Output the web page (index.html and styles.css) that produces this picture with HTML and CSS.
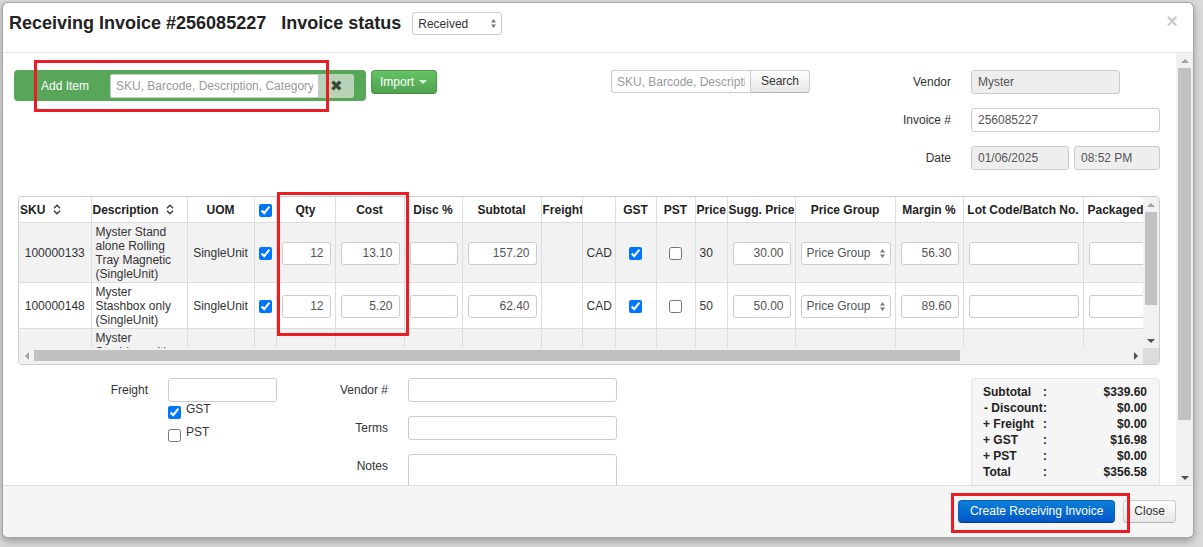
FILE: index.html
```html
<!DOCTYPE html>
<html lang="en">
<head>
	<meta charset="UTF-8">
	<title>Receiving Invoice</title>
	<link rel="stylesheet" href="styles.css">
</head>
<body>
	<div class="modal">
		<div class="modal-header">
			<h3 class="title">Receiving Invoice #256085227 <span class="title-status">Invoice status</span></h3>
			<div class="select status-select">
				<span>Received</span>
				<svg width="5" height="9" viewBox="0 0 5 9"><path d="M0 3.5L2.5 0L5 3.5Z M0 5.5L2.5 9L5 5.5Z" fill="#777"/></svg>
			</div>
			<span class="close">&times;</span>
		</div>

		<div class="modal-body">
			<div class="body-content">
				<div class="top-row">
					<div class="add-bar">
						<span class="add-label">Add Item</span>
						<input type="text" class="add-input" placeholder="SKU, Barcode, Description, Category">
						<span class="clear-btn">&#10006;</span>
					</div>
					<button class="btn btn-success import">Import <span class="caret"></span></button>
					<div class="search-group">
						<input type="text" class="search-input" placeholder="SKU, Barcode, Description">
						<button class="btn search-btn">Search</button>
					</div>
					<div class="vendor-form">
						<label class="f-label">Vendor</label>
						<div><input type="text" class="f-input readonly vendor-input" value="Myster"></div>
						<label class="f-label">Invoice #</label>
						<div><input type="text" class="f-input invoice-input" value="256085227"></div>
						<label class="f-label">Date</label>
						<div class="date-pair">
							<input type="text" class="f-input readonly date-input" value="01/06/2025">
							<input type="text" class="f-input readonly time-input" value="08:52 PM">
						</div>
					</div>
				</div>

				<div class="grid-wrap">
					<div class="grid-main">
						<div class="grid-view">
							<table class="grid">
								<colgroup>
									<col class="w-sku"><col class="w-desc"><col class="w-uom"><col class="w-chk">
									<col class="w-qty"><col class="w-cost"><col class="w-disc"><col class="w-sub">
									<col class="w-frt"><col class="w-cur"><col class="w-gst"><col class="w-pst">
									<col class="w-price"><col class="w-sugg"><col class="w-pg"><col class="w-mgn">
									<col class="w-lot"><col class="w-pack">
								</colgroup>
								<thead>
									<tr>
										<th class="left">SKU <svg class="sort" width="8" height="11" viewBox="0 0 8 11"><path d="M1 4.2L4 1.2L7 4.2M1 6.8L4 9.8L7 6.8" fill="none" stroke="#333" stroke-width="1.3"/></svg></th>
										<th class="left">Description <svg class="sort" width="8" height="11" viewBox="0 0 8 11"><path d="M1 4.2L4 1.2L7 4.2M1 6.8L4 9.8L7 6.8" fill="none" stroke="#333" stroke-width="1.3"/></svg></th>
										<th>UOM</th>
										<th><input type="checkbox" checked></th>
										<th>Qty</th>
										<th>Cost</th>
										<th>Disc %</th>
										<th>Subtotal</th>
										<th>Freight</th>
										<th></th>
										<th>GST</th>
										<th>PST</th>
										<th>Price</th>
										<th>Sugg. Price</th>
										<th>Price Group</th>
										<th>Margin %</th>
										<th>Lot Code/Batch No.</th>
										<th class="pack-head">Packaged Date</th>
									</tr>
								</thead>
								<tbody>
									<tr>
										<td class="center">100000133</td>
										<td class="desc">Myster Stand alone Rolling Tray Magnetic (SingleUnit)</td>
										<td class="center">SingleUnit</td>
										<td class="center"><input type="checkbox" checked></td>
										<td class="in"><input type="text" class="cell-input" value="12"></td>
										<td class="in"><input type="text" class="cell-input" value="13.10"></td>
										<td class="in"><input type="text" class="cell-input" value=""></td>
										<td class="in"><input type="text" class="cell-input" value="157.20"></td>
										<td></td>
										<td>CAD</td>
										<td class="center"><input type="checkbox" checked></td>
										<td class="center"><input type="checkbox"></td>
										<td>30</td>
										<td class="in"><input type="text" class="cell-input" value="30.00"></td>
										<td class="in"><div class="select cell-select"><span>Price Group</span><svg width="5" height="9" viewBox="0 0 5 9"><path d="M0 3.5L2.5 0L5 3.5Z M0 5.5L2.5 9L5 5.5Z" fill="#777"/></svg></div></td>
										<td class="in"><input type="text" class="cell-input" value="56.30"></td>
										<td class="in"><input type="text" class="cell-input" value=""></td>
										<td class="in"><input type="text" class="cell-input" value=""></td>
									</tr>
									<tr>
										<td class="center">100000148</td>
										<td class="desc">Myster Stashbox only (SingleUnit)</td>
										<td class="center">SingleUnit</td>
										<td class="center"><input type="checkbox" checked></td>
										<td class="in"><input type="text" class="cell-input" value="12"></td>
										<td class="in"><input type="text" class="cell-input" value="5.20"></td>
										<td class="in"><input type="text" class="cell-input" value=""></td>
										<td class="in"><input type="text" class="cell-input" value="62.40"></td>
										<td></td>
										<td>CAD</td>
										<td class="center"><input type="checkbox" checked></td>
										<td class="center"><input type="checkbox"></td>
										<td>50</td>
										<td class="in"><input type="text" class="cell-input" value="50.00"></td>
										<td class="in"><div class="select cell-select"><span>Price Group</span><svg width="5" height="9" viewBox="0 0 5 9"><path d="M0 3.5L2.5 0L5 3.5Z M0 5.5L2.5 9L5 5.5Z" fill="#777"/></svg></div></td>
										<td class="in"><input type="text" class="cell-input" value="89.60"></td>
										<td class="in"><input type="text" class="cell-input" value=""></td>
										<td class="in"><input type="text" class="cell-input" value=""></td>
									</tr>
									<tr>
										<td class="center">100000162</td>
										<td class="desc">Myster Stashbox with Rolling Tray and Magnetic Lid (SingleUnit)</td>
										<td class="center">SingleUnit</td>
										<td class="center"><input type="checkbox" checked></td>
										<td class="in"><input type="text" class="cell-input" value="6"></td>
										<td class="in"><input type="text" class="cell-input" value="11.80"></td>
										<td class="in"><input type="text" class="cell-input" value=""></td>
										<td class="in"><input type="text" class="cell-input" value="70.80"></td>
										<td></td>
										<td>CAD</td>
										<td class="center"><input type="checkbox" checked></td>
										<td class="center"><input type="checkbox"></td>
										<td>28</td>
										<td class="in"><input type="text" class="cell-input" value="28.00"></td>
										<td class="in"><div class="select cell-select"><span>Price Group</span><svg width="5" height="9" viewBox="0 0 5 9"><path d="M0 3.5L2.5 0L5 3.5Z M0 5.5L2.5 9L5 5.5Z" fill="#777"/></svg></div></td>
										<td class="in"><input type="text" class="cell-input" value="57.86"></td>
										<td class="in"><input type="text" class="cell-input" value=""></td>
										<td class="in"><input type="text" class="cell-input" value=""></td>
									</tr>
								</tbody>
							</table>
						</div>
						<div class="vbar grid-vbar">
							<span class="arrow-box"><span class="tri-up"></span></span>
							<span class="thumb"></span>
							<span class="spacer"></span>
							<span class="arrow-box"><span class="tri-down"></span></span>
						</div>
					</div>
					<div class="hbar-row">
						<div class="hbar">
							<span class="arrow-box"><span class="tri-left"></span></span>
							<span class="thumb"></span>
							<span class="spacer"></span>
							<span class="arrow-box"><span class="tri-right"></span></span>
						</div>
						<div class="corner"></div>
					</div>
				</div>

				<div class="bottom-row">
					<div class="freight-form">
						<label class="f-label">Freight</label>
						<input type="text" class="f-input freight-input">
						<div class="checks">
							<label class="check"><input type="checkbox" checked><span>GST</span></label>
							<label class="check"><input type="checkbox"><span>PST</span></label>
						</div>
					</div>
					<div class="notes-form">
						<label class="f-label">Vendor #</label>
						<input type="text" class="f-input">
						<label class="f-label">Terms</label>
						<input type="text" class="f-input">
						<label class="f-label">Notes</label>
						<textarea class="f-input notes"></textarea>
					</div>
					<div class="totals">
						<span>Subtotal</span><span>:</span><span class="t-val">$339.60</span>
						<span class="t-disc">-&nbsp;Discount</span><span>:</span><span class="t-val">$0.00</span>
						<span>+ Freight</span><span>:</span><span class="t-val">$0.00</span>
						<span>+ GST</span><span>:</span><span class="t-val">$16.98</span>
						<span>+ PST</span><span>:</span><span class="t-val">$0.00</span>
						<span>Total</span><span>:</span><span class="t-val">$356.58</span>
					</div>
				</div>
			</div>
			<div class="vbar body-vbar">
				<span class="arrow-box"><span class="tri-up"></span></span>
				<span class="thumb"></span>
				<span class="spacer"></span>
				<span class="arrow-box"><span class="tri-down"></span></span>
			</div>
		</div>

		<div class="modal-footer">
			<button class="btn btn-primary">Create Receiving Invoice</button>
			<button class="btn">Close</button>
		</div>
	</div>

	<div class="mark mark-add"></div>
	<div class="mark mark-qty"></div>
	<div class="mark mark-create"></div>
</body>
</html>
```

FILE: styles.css
```css
body {
	margin: 0;
	background-color: #d9d9d9;
	font-family: "Liberation Sans", Arial, sans-serif;
	font-size: 12px;
	color: #333;
	position: relative;
	height: 547px;
	overflow: hidden;
}

input, button, textarea {
	font-family: inherit;
	font-size: 12px;
}

input[type="checkbox"] {
	width: 13px;
	height: 13px;
	margin: 0;
	vertical-align: middle;
}

.modal {
	margin: 2px 0 0 2px;
	width: 1192px;
	height: 536px;
	box-sizing: border-box;
	border: 1px solid rgba(0, 0, 0, .35);
	border-radius: 6px;
	background-color: #fff;
	box-shadow: 0 3px 7px rgba(0, 0, 0, .3);
	overflow: hidden;
	display: flex;
	flex-direction: column;
}

/* header */
.modal-header {
	height: 50px;
	box-sizing: border-box;
	border-bottom: 1px solid #e5e5e5;
	padding: 9px 15px 0 6px;
	display: flex;
	align-items: flex-start;
}

.title {
	margin: 0;
	font-size: 18px;
	line-height: 23px;
	font-weight: bold;
	color: #222;
	white-space: nowrap;
}

.title-status {
	margin-left: 10px;
}

.select {
	display: flex;
	align-items: center;
	justify-content: space-between;
	height: 23px;
	box-sizing: border-box;
	border: 1px solid #ccc;
	border-radius: 3px;
	background-color: #fff;
	padding: 0 5px 0 5px;
	color: #333;
}

.status-select {
	width: 90px;
	margin-left: 11px;
}

.close {
	margin-left: auto;
	margin-top: -1px;
	font-size: 20px;
	line-height: 20px;
	font-weight: bold;
	color: #000;
	opacity: .2;
}

/* body */
.modal-body {
	height: 432px;
	display: flex;
}

.body-content {
	flex: 1;
	overflow: hidden;
}

.top-row {
	display: flex;
	align-items: flex-start;
	padding: 17px 16px 0 11px;
}

.add-bar {
	display: flex;
	align-items: center;
	width: 352px;
	height: 31px;
	box-sizing: border-box;
	padding: 0 12px 0 27px;
	background-color: #58a658;
	border-radius: 4px;
}

.add-label {
	width: 69px;
	color: #fff;
}

.add-input {
	width: 209px;
	height: 24px;
	box-sizing: border-box;
	border: 1px solid #ccc;
	border-radius: 2px 0 0 2px;
	padding: 0 5px;
	color: #555;
	outline: none;
}

.add-input::placeholder,
.search-input::placeholder {
	color: #999;
}

.clear-btn {
	width: 35px;
	height: 24px;
	line-height: 24px;
	text-align: center;
	background-color: #b7d4b7;
	border-radius: 0 3px 3px 0;
	color: #3a463a;
	font-size: 15px;
}

.btn {
	height: 23px;
	box-sizing: border-box;
	padding: 0 10px;
	border: 1px solid #ccc;
	border-bottom-color: #b3b3b3;
	border-radius: 4px;
	background: linear-gradient(#fff, #e6e6e6);
	color: #333;
	line-height: 21px;
	white-space: nowrap;
	cursor: pointer;
}

.btn-success {
	background: linear-gradient(#62c462, #51a351);
	border-color: #4c9a4c #4c9a4c #3f8a3f;
	color: #fff;
}

.btn-primary {
	padding: 0 11px;
	background: linear-gradient(#0a80d8, #0456c6);
	border-color: #0a5bbd #0a5bbd #003f94;
	color: #fff;
}

.import {
	margin-left: 5px;
	width: 66px;
	height: 24px;
	padding: 0 0 0 8px;
	text-align: left;
}

.caret {
	display: inline-block;
	width: 0;
	height: 0;
	margin-left: 2px;
	vertical-align: middle;
	border-top: 4px solid #fff;
	border-left: 4px solid transparent;
	border-right: 4px solid transparent;
	opacity: .8;
}

.search-group {
	display: flex;
	margin-left: 174px;
}

.search-input {
	width: 139px;
	height: 23px;
	box-sizing: border-box;
	border: 1px solid #ccc;
	border-right: none;
	border-radius: 3px 0 0 3px;
	padding: 0 5px;
}

.search-btn {
	width: 60px;
	border-radius: 0 3px 3px 0;
}

.vendor-form {
	margin-left: auto;
	display: grid;
	grid-template-columns: 60px 189px;
	column-gap: 20px;
	row-gap: 14px;
}

.f-label {
	text-align: right;
	line-height: 24px;
	color: #333;
	white-space: nowrap;
}

.f-input {
	height: 24px;
	box-sizing: border-box;
	border: 1px solid #ccc;
	border-radius: 3px;
	padding: 0 6px;
	color: #555;
	background-color: #fff;
	display: block;
}

.readonly {
	background-color: #eee;
}

.vendor-input {
	width: 149px;
}

.invoice-input {
	width: 189px;
}

.date-pair {
	display: flex;
	gap: 5px;
}

.date-input {
	width: 98px;
}

.time-input {
	width: 86px;
}

/* grid */
.grid-wrap {
	margin: 26px 16px 0 15px;
	border: 1px solid #ccc;
	border-radius: 4px;
	overflow: hidden;
}

.grid-main {
	display: flex;
	height: 151px;
}

.grid-view {
	flex: 1;
	overflow: hidden;
}

.grid {
	width: 1157px;
	table-layout: fixed;
	border-collapse: collapse;
}

.w-sku { width: 72px; }
.w-desc { width: 96px; }
.w-uom { width: 67px; }
.w-chk { width: 22px; }
.w-qty { width: 59px; }
.w-cost { width: 69px; }
.w-disc { width: 58px; }
.w-sub { width: 79px; }
.w-frt { width: 41px; }
.w-cur { width: 33px; }
.w-gst { width: 41px; }
.w-pst { width: 39px; }
.w-price { width: 32px; }
.w-sugg { width: 68px; }
.w-pg { width: 100px; }
.w-mgn { width: 68px; }
.w-lot { width: 120px; }
.w-pack { width: 93px; }

.grid th,
.grid td {
	border-right: 1px solid #ddd;
	border-bottom: 1px solid #ddd;
}

.grid th {
	height: 25px;
	padding: 0 1px;
	font-weight: bold;
	color: #222;
	text-align: center;
	white-space: nowrap;
	overflow: hidden;
	background-color: #fff;
}

.grid th.left {
	text-align: left;
}

.grid th.pack-head {
	text-align: left;
	padding-left: 4px;
}

.sort {
	margin-left: 4px;
	vertical-align: -1px;
}

.grid td {
	padding: 2px 4px 1px;
	line-height: 14px;
	vertical-align: middle;
	overflow: hidden;
	white-space: nowrap;
}

.grid tbody tr:nth-child(odd) td {
	background-color: #f2f2f2;
}

.grid td.center {
	text-align: center;
	padding: 2px 1px 1px;
}

.grid td.desc {
	white-space: normal;
	padding-left: 4px;
}

.grid td.in {
	padding: 2px 4px 1px 5px;
}

.cell-input {
	display: block;
	width: 100%;
	height: 23px;
	box-sizing: border-box;
	border: 1px solid #ccc;
	border-radius: 3px;
	padding: 0 6px;
	text-align: right;
	color: #555;
	background-color: #fff;
}

.cell-select {
	width: 100%;
	color: #555;
}

/* scrollbars */
.vbar {
	display: flex;
	flex-direction: column;
	background-color: #f1f1f1;
}

.body-vbar {
	width: 17px;
}

.grid-vbar {
	width: 16px;
}

.arrow-box {
	height: 15px;
	display: flex;
	align-items: center;
	justify-content: center;
	flex-shrink: 0;
}

.vbar .thumb {
	margin: 0 2px;
	background-color: #c1c1c1;
}

.body-vbar .thumb {
	height: 352px;
}

.grid-vbar .thumb {
	height: 93px;
}

.spacer {
	flex: 1;
}

.tri-up {
	border-left: 4px solid transparent;
	border-right: 4px solid transparent;
	border-bottom: 4px solid #a3a3a3;
}

.tri-down {
	border-left: 4px solid transparent;
	border-right: 4px solid transparent;
	border-top: 4px solid #505050;
}

.tri-left {
	border-top: 4px solid transparent;
	border-bottom: 4px solid transparent;
	border-right: 4px solid #a3a3a3;
}

.tri-right {
	border-top: 4px solid transparent;
	border-bottom: 4px solid transparent;
	border-left: 4px solid #505050;
}

.hbar-row {
	display: flex;
	height: 16px;
}

.hbar {
	flex: 1;
	display: flex;
	background-color: #f1f1f1;
}

.hbar .arrow-box {
	width: 15px;
	height: auto;
}

.hbar .thumb {
	width: 926px;
	margin: 2px 0 3px;
	background-color: #c1c1c1;
}

.corner {
	width: 16px;
	background-color: #dcdcdc;
}

/* bottom */
.bottom-row {
	display: flex;
	align-items: flex-start;
	padding: 13px 16px 0 85px;
}

.freight-form {
	display: grid;
	grid-template-columns: 60px 109px;
	column-gap: 20px;
}

.freight-input {
	width: 109px;
}

.checks {
	grid-column: 2;
	display: flex;
	flex-direction: column;
}

.check {
	display: flex;
	align-items: flex-start;
	height: 23px;
	line-height: 14px;
}

.check input {
	margin: 4px 5px 0 0;
}

.notes-form {
	margin-left: 51px;
	display: grid;
	grid-template-columns: 60px 209px;
	column-gap: 20px;
	row-gap: 14px;
}

.notes-form .f-input {
	width: 209px;
}

.notes {
	height: 60px;
	resize: none;
}

.totals {
	margin-left: auto;
	width: 189px;
	box-sizing: border-box;
	padding: 5px 12px 6px 11px;
	background-color: #f5f5f5;
	border: 1px solid #e3e3e3;
	border-radius: 4px;
	display: grid;
	grid-template-columns: 60px 10px 1fr;
	line-height: 16px;
	font-weight: bold;
	color: #222;
	white-space: nowrap;
}

.t-disc {
	padding-left: 1px;
}

.t-val {
	text-align: right;
}

/* footer */
.modal-footer {
	flex: 1;
	border-top: 1px solid #ddd;
	background-color: #f5f5f5;
	padding: 14px 17px 0;
	display: flex;
	justify-content: flex-end;
	align-items: flex-start;
	gap: 8px;
}

/* annotation boxes */
.mark {
	position: absolute;
	box-sizing: border-box;
	border: 3px solid #ec1c24;
}

.mark-add {
	left: 34px;
	top: 60px;
	width: 295px;
	height: 52px;
}

.mark-qty {
	left: 277px;
	top: 192px;
	width: 132px;
	height: 144px;
}

.mark-create {
	left: 951px;
	top: 493px;
	width: 179px;
	height: 40px;
}
```
